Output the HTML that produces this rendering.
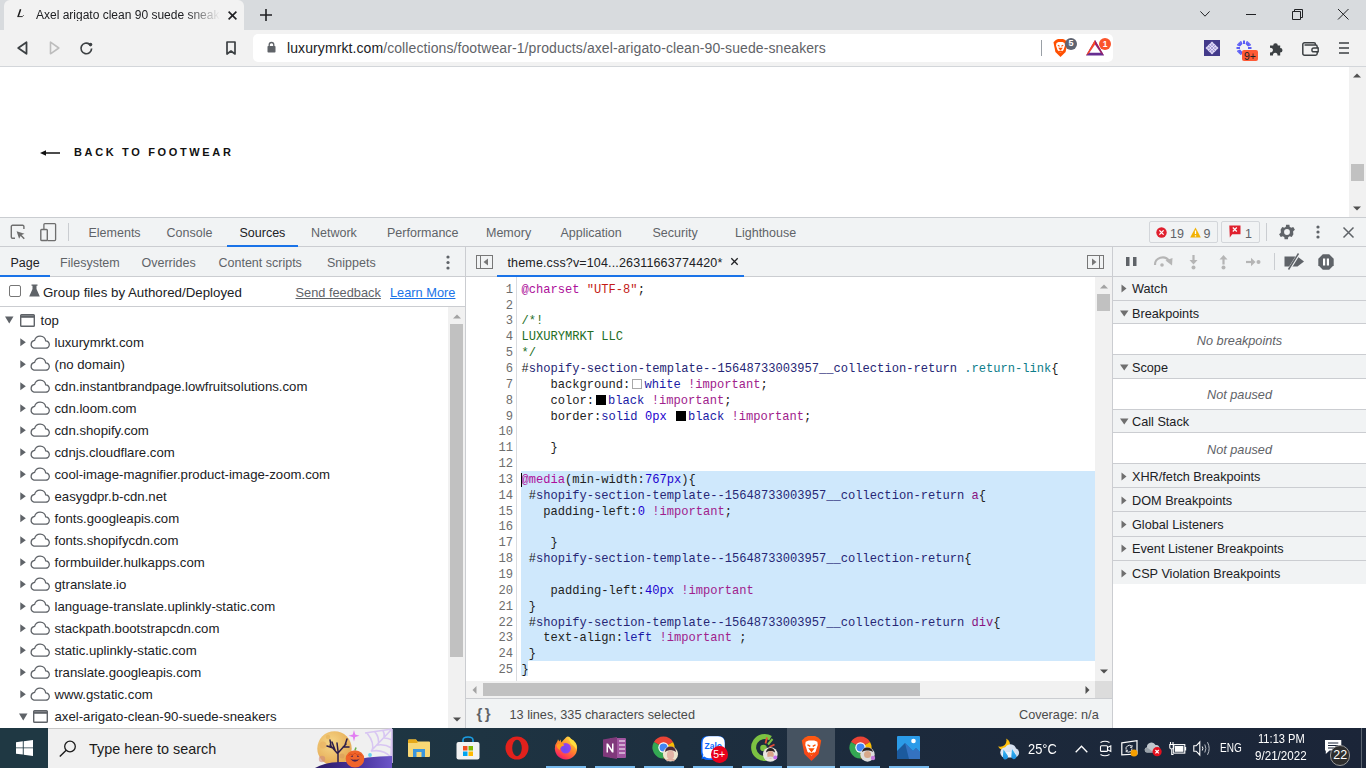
<!DOCTYPE html>
<html><head><meta charset="utf-8">
<style>
*{box-sizing:border-box;margin:0;padding:0}
html,body{width:1366px;height:768px;overflow:hidden;background:#fff;font-family:"Liberation Sans",sans-serif;color:#202124}
.a{position:absolute}
.t{position:absolute;white-space:nowrap;line-height:1}
svg{position:absolute;overflow:visible}
/* chrome */
#tabstrip{left:0;top:0;width:1366px;height:30px;background:#d8dbde}
#acttab{left:4px;top:0;width:240px;height:31px;background:#f2f2f2;border-radius:6px 6px 0 0}
#toolbar{left:0;top:30px;width:1366px;height:36px;background:#f2f2f2}
#tbline{left:0;top:66px;width:1366px;height:1px;background:#d3d6da}
#omni{left:253px;top:34px;width:860px;height:28px;background:#fff;border-radius:5px}
/* page */
#page{left:0;top:67px;width:1366px;height:150px;background:#fff}
/* devtools */
#dt{left:0;top:217px;width:1366px;height:511px;background:#fff}
.gray{background:#f1f3f4}
.bl{background:#cbcdd1}
.ui{font-size:12px;color:#303942}
.mono{font-family:"Liberation Mono",monospace;font-size:12px}
/* taskbar */
#task{left:0;top:728px;width:1366px;height:40px;background:linear-gradient(90deg,#1f3a45 0%,#1e3442 35%,#1c2a3c 65%,#1b2538 100%)}
</style></head><body>
<div id="tabstrip" class="a"></div>
<div id="acttab" class="a"></div>
<div id="toolbar" class="a"></div>
<div id="tbline" class="a"></div>
<div id="omni" class="a"></div>

<!-- tab -->
<svg style="left:16px;top:8px" width="9" height="10" viewBox="0 0 9 10"><path d="M4.6 1.3L2.1 8.4" stroke="#1a1a1a" stroke-width="1.5"/><path d="M1.3 8.6H6.3L7.6 7.3" fill="none" stroke="#1a1a1a" stroke-width="0.9"/></svg>
<div class="t" style="left:36px;top:8.6px;font-size:12px;color:#202124;width:184px;overflow:hidden;-webkit-mask-image:linear-gradient(90deg,#000 150px,transparent 184px)">Axel arigato clean 90 suede sneakers</div>
<svg style="left:227.5px;top:10.5px" width="9" height="9"><path d="M0.6 0.6L8.4 8.4M8.4 0.6L0.6 8.4" stroke="#202124" stroke-width="1.6"/></svg>
<svg style="left:260px;top:9px" width="12" height="12"><path d="M6 0V12M0 6H12" stroke="#202124" stroke-width="1.6"/></svg>
<!-- window controls -->
<svg style="left:1200px;top:11px" width="10" height="6"><path d="M0.4 0.4L5 5.2L9.6 0.4" fill="none" stroke="#202124" stroke-width="1"/></svg>
<svg style="left:1246px;top:14px" width="10" height="1"><path d="M0 0.5H10" stroke="#202124" stroke-width="1"/></svg>
<svg style="left:1292px;top:9px" width="11" height="11"><path d="M0.5 2.5H8.5V10.5H0.5Z M2.5 2.5V0.5H10.5V8.5H8.5" fill="none" stroke="#202124" stroke-width="1"/></svg>
<svg style="left:1338px;top:9px" width="10.5" height="10.5"><path d="M0 0L10.5 10.5M10.5 0L0 10.5" stroke="#202124" stroke-width="1"/></svg>
<!-- nav -->
<svg style="left:17px;top:41px" width="11" height="14"><path d="M9.5 1.2V12.8L1.2 7Z" fill="none" stroke="#3c4043" stroke-width="1.8" stroke-linejoin="round"/></svg>
<svg style="left:49px;top:41px" width="11" height="14"><path d="M1.5 1.2V12.8L9.8 7Z" fill="none" stroke="#bdbdbd" stroke-width="1.6" stroke-linejoin="round"/></svg>
<svg style="left:79px;top:41px" width="15" height="15"><path d="M12.6 7.5A5.3 5.3 0 1 1 10.5 3.2" fill="none" stroke="#3c4043" stroke-width="1.7"/><circle cx="11.5" cy="3.6" r="1.8" fill="#3c4043"/></svg>
<svg style="left:226px;top:41px" width="10" height="14"><path d="M1 1H9V13L5 10L1 13Z" fill="none" stroke="#3c4043" stroke-width="1.7" stroke-linejoin="round"/></svg>
<!-- omnibox contents -->
<svg style="left:267px;top:41px" width="9" height="12"><path d="M2.2 5.5V3.8A2.3 2.3 0 0 1 6.8 3.8V5.5" fill="none" stroke="#5f6368" stroke-width="1.3"/><rect x="0.5" y="5" width="8" height="6.5" rx="0.8" fill="#5f6368"/></svg>
<div class="t" style="left:287px;top:41px;font-size:14px;letter-spacing:0.09px;color:#202124">luxurymrkt.com<span style="color:#5f6368">/collections/footwear-1/products/axel-arigato-clean-90-suede-sneakers</span></div>
<div class="a" style="left:1041px;top:40px;width:1px;height:16px;background:#9aa0a6"></div>
<!-- brave lion -->
<svg style="left:1053px;top:39px" width="15" height="18" viewBox="0 0 15 18"><path d="M2.8 1L5 0H10L12.2 1L14.5 3.3L14 6L12.6 13L7.5 18L2.4 13L1 6L0.5 3.3Z" fill="#ff4f00"/><path d="M3.5 4L5.5 3H9.5L11.5 4L12 6.5L10.5 11L7.5 14L4.5 11L3 6.5Z" fill="#fff"/><path d="M4.8 6.3L6.6 7.3M10.2 6.3L8.4 7.3M6.3 9.2H8.7L7.5 10.8ZM5.8 12L7.5 13.2L9.2 12" fill="#ff4f00" stroke="#ff4f00" stroke-width="1.1"/></svg>
<div class="a" style="left:1065.2px;top:37.8px;width:11.8px;height:11.8px;border-radius:6px;background:#5e6370;color:#fff;font-size:9px;font-weight:bold;text-align:center;line-height:11.8px">5</div>
<!-- BAT -->
<svg style="left:1086px;top:40px" width="18" height="16" viewBox="0 0 18 16"><path d="M9 0L18 15.6H0Z" fill="#662d91"/><path d="M9 0L0 15.6L3.4 12.8L9 4.6Z" fill="#ff4724"/><path d="M9 0L18 15.6L14.6 12.8L9 4.6Z" fill="#9e1f63"/><path d="M9 4.6L14.6 12.8H3.4Z" fill="#fff"/></svg>
<div class="a" style="left:1099px;top:37.7px;width:12px;height:12px;border-radius:6px;background:#fb542b;color:#fff;font-size:8.5px;font-weight:bold;text-align:center;line-height:12px">1</div>
<!-- extensions -->
<div class="a" style="left:1204px;top:40px;width:16px;height:16px;background:#433a8a"></div>
<svg style="left:1204px;top:40px" width="16" height="16"><path d="M8 1.5L14.5 8L8 14.5L1.5 8Z" fill="#e4def8"/><path d="M4.75 4.75L11.25 11.25M3.1 6.4L9.6 12.9M6.4 3.1L12.9 9.6M11.25 4.75L4.75 11.25M12.9 6.4L6.4 12.9M9.6 3.1L3.1 9.6" stroke="#8c82c8" stroke-width="0.7"/></svg>
<svg style="left:1236px;top:40px" width="16" height="16" viewBox="0 0 16 16"><g stroke="#5a5cf5" stroke-width="2"><path d="M8 0.5V4M8 12V15.5M0.5 8H4M12 8H15.5M2.7 2.7L5.2 5.2M10.8 10.8L13.3 13.3M13.3 2.7L10.8 5.2M5.2 10.8L2.7 13.3"/><path d="M4.5 1.2L5.8 4.4M11.5 1.2L10.2 4.4M1.2 4.5L4.4 5.8M14.8 4.5L11.6 5.8M1.2 11.5L4.4 10.2M4.5 14.8L5.8 11.6" stroke-width="1.6"/></g></svg>
<div class="a" style="left:1242px;top:49.7px;width:15.8px;height:11.8px;border-radius:2px;background:#ff5a36;color:#202124;font-size:10.5px;text-align:center;line-height:12px">9+</div>
<svg style="left:1268.5px;top:40.5px" width="15" height="15" viewBox="0 0 15 15"><path d="M1 4.5H4.2A2.3 2.3 0 1 1 8.8 4.5H11.2V7A2.3 2.3 0 1 1 11.2 11.6V14.5H8.5A2.3 2.3 0 1 0 4 14.5H1V11.3A2.3 2.3 0 1 0 1 6.9Z" fill="#3c4043"/></svg>
<svg style="left:1302px;top:41.5px" width="17" height="14" viewBox="0 0 17 14"><path d="M13.5 3V2.2A1.5 1.5 0 0 0 12 0.8H2.5A1.7 1.7 0 0 0 0.8 2.5V11.5A1.7 1.7 0 0 0 2.5 13.2H13.5A1.7 1.7 0 0 0 15.2 11.5V4.7A1.7 1.7 0 0 0 13.5 3H2.5" fill="none" stroke="#3c4043" stroke-width="1.5"/><path d="M16.2 6H11.8A1.9 1.9 0 0 0 11.8 9.8H16.2Z" fill="#f2f2f2" stroke="#3c4043" stroke-width="1.4"/></svg>
<svg style="left:1339px;top:42px" width="10" height="12"><path d="M0 1H10M0 6H10M0 11H10" stroke="#3c4043" stroke-width="1.5"/></svg>
<div id="page" class="a"></div>

<!-- page content -->
<svg style="left:40px;top:150px" width="20" height="6"><path d="M3 3H20" stroke="#111" stroke-width="1.5"/><path d="M0 3L6 0.2V5.8Z" fill="#111"/></svg>
<div class="t" style="left:74px;top:146.6px;font-size:11px;font-weight:bold;letter-spacing:2.65px;color:#111">BACK TO FOOTWEAR</div>
<div class="a" style="left:1349px;top:67px;width:17px;height:150px;background:#f1f1f1"></div>
<svg style="left:1352px;top:72px" width="10" height="6"><path d="M1 5.5L5 1.5L9 5.5Z" fill="#505050"/></svg>
<div class="a" style="left:1351px;top:164px;width:13px;height:17px;background:#c1c1c1"></div>
<svg style="left:1352px;top:205.5px" width="10" height="6"><path d="M1 0.5L5 4.5L9 0.5Z" fill="#505050"/></svg>

<div id="dt" class="a"></div>

<!-- devtools frame -->
<div class="a" style="left:0;top:217px;width:1366px;height:1px;background:#cacdd1"></div>
<div class="a gray" style="left:0;top:218px;width:1366px;height:28px"></div>
<div class="a bl" style="left:0;top:246px;width:1366px;height:1px"></div>
<div class="a gray" style="left:0;top:247px;width:1366px;height:29px"></div>
<div class="a bl" style="left:0;top:276px;width:1366px;height:1px"></div>
<div class="a bl" style="left:465px;top:247px;width:1px;height:481px"></div>
<div class="a bl" style="left:1112px;top:247px;width:1px;height:481px"></div>
<!-- main toolbar icons -->
<svg style="left:10px;top:224px" width="18" height="17" viewBox="0 0 18 17"><path d="M5 14.2H2.5A1.2 1.2 0 0 1 1.3 13V2.5A1.2 1.2 0 0 1 2.5 1.3H12.7A1.2 1.2 0 0 1 13.9 2.5V5" fill="none" stroke="#6e6e6e" stroke-width="1.4"/><path d="M6.6 7.3L14.5 9.7L11.6 10.9L14.8 14.3L13.7 15.2L10.6 11.9L9.1 14.7Z" fill="#6e6e6e"/></svg>
<svg style="left:40px;top:223px" width="17" height="19" viewBox="0 0 17 19"><path d="M3.9 6V1.6A1 1 0 0 1 4.9 0.6H14.6A1 1 0 0 1 15.6 1.6V16.6A1 1 0 0 1 14.6 17.6H7.5" fill="none" stroke="#6e6e6e" stroke-width="1.3"/><rect x="0.8" y="6.5" width="6.5" height="11" rx="0.8" fill="none" stroke="#6e6e6e" stroke-width="1.4"/></svg>
<div class="a" style="left:68px;top:223px;width:1px;height:18px;background:#cacdd1"></div>
<div class="t" style="left:88.5px;top:227px;font-size:12.5px;color:#5f6368">Elements</div>
<div class="t" style="left:166.5px;top:227px;font-size:12.5px;color:#5f6368">Console</div>
<div class="t" style="left:239.5px;top:227px;font-size:12.5px;color:#202124">Sources</div>
<div class="a" style="left:227px;top:245px;width:71px;height:2px;background:#1a73e8"></div>
<div class="t" style="left:311px;top:227px;font-size:12.5px;color:#5f6368">Network</div>
<div class="t" style="left:387px;top:227px;font-size:12.5px;color:#5f6368">Performance</div>
<div class="t" style="left:486px;top:227px;font-size:12.5px;color:#5f6368">Memory</div>
<div class="t" style="left:560.5px;top:227px;font-size:12.5px;color:#5f6368">Application</div>
<div class="t" style="left:652.5px;top:227px;font-size:12.5px;color:#5f6368">Security</div>
<div class="t" style="left:735px;top:227px;font-size:12.5px;color:#5f6368">Lighthouse</div>
<!-- right of main toolbar -->
<div class="a" style="left:1149px;top:221px;width:69px;height:22px;border:1px solid #d3d6da;border-radius:2px"></div>
<svg style="left:1156px;top:227px" width="11" height="11"><circle cx="5.5" cy="5.5" r="5.2" fill="#e0202e"/><path d="M3.4 3.4L7.6 7.6M7.6 3.4L3.4 7.6" stroke="#fff" stroke-width="1.3"/></svg>
<div class="t" style="left:1170px;top:227.8px;font-size:12.5px;color:#5f6368">19</div>
<svg style="left:1189.5px;top:226.5px" width="11" height="11"><path d="M5.5 0.5L10.8 10.5H0.2Z" fill="#f2b204"/><path d="M5.5 3.5V7M5.5 8.2V9.6" stroke="#fff" stroke-width="1.3"/></svg>
<div class="t" style="left:1203.5px;top:227.8px;font-size:12.5px;color:#5f6368">9</div>
<div class="a" style="left:1221px;top:221px;width:39px;height:22px;border:1px solid #d3d6da;border-radius:2px"></div>
<svg style="left:1228.5px;top:225px" width="12" height="13" viewBox="0 0 12 13"><path d="M0.3 0.5H11.5V9.3H3.2L0.8 12.5Z" fill="#e0202e"/><path d="M3.8 2.5L7.8 6.5M7.8 2.5L3.8 6.5" stroke="#fff" stroke-width="1.2"/></svg>
<div class="t" style="left:1245px;top:227.8px;font-size:12.5px;color:#5f6368">1</div>
<div class="a" style="left:1266px;top:223px;width:1px;height:18px;background:#cacdd1"></div>
<svg style="left:1277px;top:222px" width="20" height="20" viewBox="0 0 24 24"><path fill="#5f6368" d="M19.4 13a7.6 7.6 0 0 0 0-2l2.1-1.6-2-3.5-2.5 1a7.3 7.3 0 0 0-1.7-1l-.4-2.7h-4l-.4 2.7a7.3 7.3 0 0 0-1.7 1l-2.5-1-2 3.5L4.6 11a7.6 7.6 0 0 0 0 2l-2.1 1.6 2 3.5 2.5-1a7.3 7.3 0 0 0 1.7 1l.4 2.7h4l.4-2.7a7.3 7.3 0 0 0 1.7-1l2.5 1 2-3.5zM12 15.5a3.5 3.5 0 1 1 0-7 3.5 3.5 0 0 1 0 7z"/></svg>
<svg style="left:1316px;top:225px" width="4" height="14"><circle cx="2" cy="2" r="1.6" fill="#5f6368"/><circle cx="2" cy="7" r="1.6" fill="#5f6368"/><circle cx="2" cy="12" r="1.6" fill="#5f6368"/></svg>
<svg style="left:1343px;top:226.5px" width="11" height="11"><path d="M0.5 0.5L10.5 10.5M10.5 0.5L0.5 10.5" stroke="#5f6368" stroke-width="1.5"/></svg>
<!-- sources row: navigator tabs -->
<div class="t" style="left:10.5px;top:256.5px;font-size:12.5px;color:#202124">Page</div>
<div class="a" style="left:0;top:275px;width:50px;height:2px;background:#1a73e8"></div>
<div class="t" style="left:60px;top:256.5px;font-size:12.5px;color:#5f6368">Filesystem</div>
<div class="t" style="left:141.5px;top:256.5px;font-size:12.5px;color:#5f6368">Overrides</div>
<div class="t" style="left:218.5px;top:256.5px;font-size:12.5px;color:#5f6368">Content scripts</div>
<div class="t" style="left:327px;top:256.5px;font-size:12.5px;color:#5f6368">Snippets</div>
<svg style="left:446px;top:255px" width="4" height="15"><circle cx="2" cy="2" r="1.6" fill="#5f6368"/><circle cx="2" cy="7.5" r="1.6" fill="#5f6368"/><circle cx="2" cy="13" r="1.6" fill="#5f6368"/></svg>
<!-- editor tabs row -->
<svg style="left:476px;top:255px" width="17" height="14"><rect x="0.5" y="0.5" width="16" height="13" fill="none" stroke="#777" stroke-width="1"/><path d="M4.5 0.5V13.5" stroke="#777" stroke-width="1"/><path d="M12 3.5V10.5L7.5 7Z" fill="#777"/></svg>
<div class="t" style="left:507.5px;top:256.5px;font-size:12.5px;color:#202124;letter-spacing:0.15px">theme.css?v=104...26311663774420*</div>
<svg style="left:731px;top:258px" width="7" height="7"><path d="M0.3 0.3L6.7 6.7M6.7 0.3L0.3 6.7" stroke="#202124" stroke-width="1.3"/></svg>
<div class="a" style="left:497px;top:275px;width:247px;height:2px;background:#1a73e8"></div>
<svg style="left:1087px;top:255px" width="17" height="14"><rect x="0.5" y="0.5" width="16" height="13" fill="none" stroke="#777" stroke-width="1"/><path d="M12.5 0.5V13.5" stroke="#777" stroke-width="1"/><path d="M5 3.5V10.5L9.5 7Z" fill="#777"/></svg>
<!-- debugger toolbar -->
<svg style="left:1125.5px;top:257px" width="11" height="9"><rect x="0" y="0" width="3.5" height="9" fill="#5f6368"/><rect x="7" y="0" width="3.5" height="9" fill="#5f6368"/></svg>
<svg style="left:1153px;top:256px" width="20" height="11" viewBox="0 0 20 11"><path d="M2 9A7.5 7 0 0 1 16 5" fill="none" stroke="#b5b5b5" stroke-width="2.2"/><path d="M12.5 4.5L19 9.5L19.5 2Z" fill="#b5b5b5"/><circle cx="9" cy="9" r="1.8" fill="#b5b5b5"/></svg>
<svg style="left:1187.5px;top:255px" width="11" height="15"><path d="M5.5 0V6" stroke="#b5b5b5" stroke-width="2.2"/><path d="M1.5 5H9.5L5.5 9.5Z" fill="#b5b5b5"/><circle cx="5.5" cy="12.5" r="2" fill="#b5b5b5"/></svg>
<svg style="left:1218px;top:255px" width="11" height="15"><path d="M5.5 3.5V9.5" stroke="#b5b5b5" stroke-width="2.2"/><path d="M1.5 4.5H9.5L5.5 0Z" fill="#b5b5b5"/><circle cx="5.5" cy="12.5" r="2" fill="#b5b5b5"/></svg>
<svg style="left:1246px;top:257px" width="15" height="10"><path d="M0 5H6" stroke="#b5b5b5" stroke-width="2.2"/><path d="M5 0.8V9.2L9.5 5Z" fill="#b5b5b5"/><circle cx="12.5" cy="5" r="2" fill="#b5b5b5"/></svg>
<div class="a" style="left:1274px;top:253px;width:1px;height:17px;background:#cacdd1"></div>
<svg style="left:1284px;top:253px" width="21" height="17" viewBox="0 0 21 17"><path d="M0.5 3.5H13.5L20 8.5L13.5 13.5H0.5Z" fill="#5f6368"/><path d="M5 16.5L15 0.5" stroke="#f1f3f4" stroke-width="3"/><path d="M4.5 16.5L14.5 0.5" stroke="#5f6368" stroke-width="1.5"/></svg>
<svg style="left:1317.5px;top:253.5px" width="16" height="16" viewBox="0 0 16 16"><path d="M4.8 0.3H11.2L15.7 4.8V11.2L11.2 15.7H4.8L0.3 11.2V4.8Z" fill="#5f6368"/><rect x="5" y="4.5" width="2.2" height="7" fill="#fff"/><rect x="8.8" y="4.5" width="2.2" height="7" fill="#fff"/></svg>


<!-- navigator -->
<div class="a" style="left:9px;top:285px;width:12px;height:12px;border:1px solid #767676;border-radius:2px;background:#fff"></div>
<svg style="left:29px;top:284px" width="11" height="13" viewBox="0 0 11 13"><path d="M2.5 0.5H8.5V1.8H7.5V5L10.8 12.5H0.2L3.5 5V1.8H2.5Z" fill="#5f6368"/></svg>
<div class="t" style="left:43px;top:285.8px;font-size:13.3px;color:#202124">Group files by Authored/Deployed</div>
<div class="t" style="left:295.5px;top:287px;font-size:12.8px;color:#5f6368;text-decoration:underline">Send feedback</div>
<div class="t" style="left:390px;top:287px;font-size:12.8px;color:#1a73e8;text-decoration:underline">Learn More</div>
<div class="a bl" style="left:0;top:306px;width:465px;height:1px"></div>
<!-- tree -->
<svg style="left:5px;top:316px" width="9" height="8"><path d="M0 0.5H8.5L4.25 7.5Z" fill="#5f6368"/></svg>
<svg style="left:19.5px;top:313.5px" width="15" height="13"><rect x="0.7" y="0.7" width="13.6" height="11.6" rx="0.8" fill="none" stroke="#5f6368" stroke-width="1.4"/><path d="M0.7 2.6H14.3" stroke="#5f6368" stroke-width="2.4"/></svg>
<div class="t" style="left:40.5px;top:313.6px;font-size:13.2px;color:#202124">top</div>
<svg style="left:20px;top:337.5px" width="6" height="9"><path d="M0.3 0.3V8.2L5.8 4.25Z" fill="#5f6368"/></svg><svg style="left:29px;top:336px" width="21" height="13" viewBox="0 0 21 13"><path d="M5 12.2H16.5A3.7 3.7 0 0 0 16.7 4.8A5.7 5.7 0 0 0 5.6 4.4A4 4 0 0 0 5 12.2Z" fill="none" stroke="#5f6368" stroke-width="1.3"/></svg><div class="t" style="left:54.5px;top:335.8px;font-size:13.2px;color:#202124">luxurymrkt.com</div>
<svg style="left:20px;top:359.5px" width="6" height="9"><path d="M0.3 0.3V8.2L5.8 4.25Z" fill="#5f6368"/></svg><svg style="left:29px;top:358px" width="21" height="13" viewBox="0 0 21 13"><path d="M5 12.2H16.5A3.7 3.7 0 0 0 16.7 4.8A5.7 5.7 0 0 0 5.6 4.4A4 4 0 0 0 5 12.2Z" fill="none" stroke="#5f6368" stroke-width="1.3"/></svg><div class="t" style="left:54.5px;top:357.8px;font-size:13.2px;color:#202124">(no domain)</div>
<svg style="left:20px;top:381.5px" width="6" height="9"><path d="M0.3 0.3V8.2L5.8 4.25Z" fill="#5f6368"/></svg><svg style="left:29px;top:380px" width="21" height="13" viewBox="0 0 21 13"><path d="M5 12.2H16.5A3.7 3.7 0 0 0 16.7 4.8A5.7 5.7 0 0 0 5.6 4.4A4 4 0 0 0 5 12.2Z" fill="none" stroke="#5f6368" stroke-width="1.3"/></svg><div class="t" style="left:54.5px;top:379.8px;font-size:13.2px;color:#202124">cdn.instantbrandpage.lowfruitsolutions.com</div>
<svg style="left:20px;top:403.5px" width="6" height="9"><path d="M0.3 0.3V8.2L5.8 4.25Z" fill="#5f6368"/></svg><svg style="left:29px;top:402px" width="21" height="13" viewBox="0 0 21 13"><path d="M5 12.2H16.5A3.7 3.7 0 0 0 16.7 4.8A5.7 5.7 0 0 0 5.6 4.4A4 4 0 0 0 5 12.2Z" fill="none" stroke="#5f6368" stroke-width="1.3"/></svg><div class="t" style="left:54.5px;top:401.8px;font-size:13.2px;color:#202124">cdn.loom.com</div>
<svg style="left:20px;top:425.5px" width="6" height="9"><path d="M0.3 0.3V8.2L5.8 4.25Z" fill="#5f6368"/></svg><svg style="left:29px;top:424px" width="21" height="13" viewBox="0 0 21 13"><path d="M5 12.2H16.5A3.7 3.7 0 0 0 16.7 4.8A5.7 5.7 0 0 0 5.6 4.4A4 4 0 0 0 5 12.2Z" fill="none" stroke="#5f6368" stroke-width="1.3"/></svg><div class="t" style="left:54.5px;top:423.8px;font-size:13.2px;color:#202124">cdn.shopify.com</div>
<svg style="left:20px;top:447.5px" width="6" height="9"><path d="M0.3 0.3V8.2L5.8 4.25Z" fill="#5f6368"/></svg><svg style="left:29px;top:446px" width="21" height="13" viewBox="0 0 21 13"><path d="M5 12.2H16.5A3.7 3.7 0 0 0 16.7 4.8A5.7 5.7 0 0 0 5.6 4.4A4 4 0 0 0 5 12.2Z" fill="none" stroke="#5f6368" stroke-width="1.3"/></svg><div class="t" style="left:54.5px;top:445.8px;font-size:13.2px;color:#202124">cdnjs.cloudflare.com</div>
<svg style="left:20px;top:469.5px" width="6" height="9"><path d="M0.3 0.3V8.2L5.8 4.25Z" fill="#5f6368"/></svg><svg style="left:29px;top:468px" width="21" height="13" viewBox="0 0 21 13"><path d="M5 12.2H16.5A3.7 3.7 0 0 0 16.7 4.8A5.7 5.7 0 0 0 5.6 4.4A4 4 0 0 0 5 12.2Z" fill="none" stroke="#5f6368" stroke-width="1.3"/></svg><div class="t" style="left:54.5px;top:467.8px;font-size:13.2px;color:#202124">cool-image-magnifier.product-image-zoom.com</div>
<svg style="left:20px;top:491.5px" width="6" height="9"><path d="M0.3 0.3V8.2L5.8 4.25Z" fill="#5f6368"/></svg><svg style="left:29px;top:490px" width="21" height="13" viewBox="0 0 21 13"><path d="M5 12.2H16.5A3.7 3.7 0 0 0 16.7 4.8A5.7 5.7 0 0 0 5.6 4.4A4 4 0 0 0 5 12.2Z" fill="none" stroke="#5f6368" stroke-width="1.3"/></svg><div class="t" style="left:54.5px;top:489.8px;font-size:13.2px;color:#202124">easygdpr.b-cdn.net</div>
<svg style="left:20px;top:513.5px" width="6" height="9"><path d="M0.3 0.3V8.2L5.8 4.25Z" fill="#5f6368"/></svg><svg style="left:29px;top:512px" width="21" height="13" viewBox="0 0 21 13"><path d="M5 12.2H16.5A3.7 3.7 0 0 0 16.7 4.8A5.7 5.7 0 0 0 5.6 4.4A4 4 0 0 0 5 12.2Z" fill="none" stroke="#5f6368" stroke-width="1.3"/></svg><div class="t" style="left:54.5px;top:511.8px;font-size:13.2px;color:#202124">fonts.googleapis.com</div>
<svg style="left:20px;top:535.5px" width="6" height="9"><path d="M0.3 0.3V8.2L5.8 4.25Z" fill="#5f6368"/></svg><svg style="left:29px;top:534px" width="21" height="13" viewBox="0 0 21 13"><path d="M5 12.2H16.5A3.7 3.7 0 0 0 16.7 4.8A5.7 5.7 0 0 0 5.6 4.4A4 4 0 0 0 5 12.2Z" fill="none" stroke="#5f6368" stroke-width="1.3"/></svg><div class="t" style="left:54.5px;top:533.8px;font-size:13.2px;color:#202124">fonts.shopifycdn.com</div>
<svg style="left:20px;top:557.5px" width="6" height="9"><path d="M0.3 0.3V8.2L5.8 4.25Z" fill="#5f6368"/></svg><svg style="left:29px;top:556px" width="21" height="13" viewBox="0 0 21 13"><path d="M5 12.2H16.5A3.7 3.7 0 0 0 16.7 4.8A5.7 5.7 0 0 0 5.6 4.4A4 4 0 0 0 5 12.2Z" fill="none" stroke="#5f6368" stroke-width="1.3"/></svg><div class="t" style="left:54.5px;top:555.8px;font-size:13.2px;color:#202124">formbuilder.hulkapps.com</div>
<svg style="left:20px;top:579.5px" width="6" height="9"><path d="M0.3 0.3V8.2L5.8 4.25Z" fill="#5f6368"/></svg><svg style="left:29px;top:578px" width="21" height="13" viewBox="0 0 21 13"><path d="M5 12.2H16.5A3.7 3.7 0 0 0 16.7 4.8A5.7 5.7 0 0 0 5.6 4.4A4 4 0 0 0 5 12.2Z" fill="none" stroke="#5f6368" stroke-width="1.3"/></svg><div class="t" style="left:54.5px;top:577.8px;font-size:13.2px;color:#202124">gtranslate.io</div>
<svg style="left:20px;top:601.5px" width="6" height="9"><path d="M0.3 0.3V8.2L5.8 4.25Z" fill="#5f6368"/></svg><svg style="left:29px;top:600px" width="21" height="13" viewBox="0 0 21 13"><path d="M5 12.2H16.5A3.7 3.7 0 0 0 16.7 4.8A5.7 5.7 0 0 0 5.6 4.4A4 4 0 0 0 5 12.2Z" fill="none" stroke="#5f6368" stroke-width="1.3"/></svg><div class="t" style="left:54.5px;top:599.8px;font-size:13.2px;color:#202124">language-translate.uplinkly-static.com</div>
<svg style="left:20px;top:623.5px" width="6" height="9"><path d="M0.3 0.3V8.2L5.8 4.25Z" fill="#5f6368"/></svg><svg style="left:29px;top:622px" width="21" height="13" viewBox="0 0 21 13"><path d="M5 12.2H16.5A3.7 3.7 0 0 0 16.7 4.8A5.7 5.7 0 0 0 5.6 4.4A4 4 0 0 0 5 12.2Z" fill="none" stroke="#5f6368" stroke-width="1.3"/></svg><div class="t" style="left:54.5px;top:621.8px;font-size:13.2px;color:#202124">stackpath.bootstrapcdn.com</div>
<svg style="left:20px;top:645.5px" width="6" height="9"><path d="M0.3 0.3V8.2L5.8 4.25Z" fill="#5f6368"/></svg><svg style="left:29px;top:644px" width="21" height="13" viewBox="0 0 21 13"><path d="M5 12.2H16.5A3.7 3.7 0 0 0 16.7 4.8A5.7 5.7 0 0 0 5.6 4.4A4 4 0 0 0 5 12.2Z" fill="none" stroke="#5f6368" stroke-width="1.3"/></svg><div class="t" style="left:54.5px;top:643.8px;font-size:13.2px;color:#202124">static.uplinkly-static.com</div>
<svg style="left:20px;top:667.5px" width="6" height="9"><path d="M0.3 0.3V8.2L5.8 4.25Z" fill="#5f6368"/></svg><svg style="left:29px;top:666px" width="21" height="13" viewBox="0 0 21 13"><path d="M5 12.2H16.5A3.7 3.7 0 0 0 16.7 4.8A5.7 5.7 0 0 0 5.6 4.4A4 4 0 0 0 5 12.2Z" fill="none" stroke="#5f6368" stroke-width="1.3"/></svg><div class="t" style="left:54.5px;top:665.8px;font-size:13.2px;color:#202124">translate.googleapis.com</div>
<svg style="left:20px;top:689.5px" width="6" height="9"><path d="M0.3 0.3V8.2L5.8 4.25Z" fill="#5f6368"/></svg><svg style="left:29px;top:688px" width="21" height="13" viewBox="0 0 21 13"><path d="M5 12.2H16.5A3.7 3.7 0 0 0 16.7 4.8A5.7 5.7 0 0 0 5.6 4.4A4 4 0 0 0 5 12.2Z" fill="none" stroke="#5f6368" stroke-width="1.3"/></svg><div class="t" style="left:54.5px;top:687.8px;font-size:13.2px;color:#202124">www.gstatic.com</div>
<svg style="left:19px;top:713px" width="9" height="8"><path d="M0 0.5H8.5L4.25 7.5Z" fill="#5f6368"/></svg><svg style="left:33px;top:709.5px" width="15" height="13"><rect x="0.7" y="0.7" width="13.6" height="11.6" rx="0.8" fill="none" stroke="#5f6368" stroke-width="1.4"/><path d="M0.7 2.6H14.3" stroke="#5f6368" stroke-width="2.4"/></svg><div class="t" style="left:54.5px;top:709.8px;font-size:13.2px;color:#202124">axel-arigato-clean-90-suede-sneakers</div>

<div class="a" style="left:448px;top:307px;width:17px;height:421px;background:#f1f1f1"></div>
<svg style="left:451.5px;top:313px" width="10" height="6"><path d="M1 5.5L5 1.5L9 5.5Z" fill="#a3a3a3"/></svg>
<div class="a" style="left:450px;top:324px;width:13px;height:333px;background:#c1c1c1"></div>
<svg style="left:451.5px;top:716.5px" width="10" height="6"><path d="M1 0.5L5 4.5L9 0.5Z" fill="#505050"/></svg>


<!-- editor -->
<style>
.ln{position:absolute;left:467px;width:46px;text-align:right;font-family:"Liberation Mono",monospace;font-size:12.13px;line-height:15.85px;color:#6d6d6d;white-space:pre}
.cl{position:absolute;left:521.5px;font-family:"Liberation Mono",monospace;font-size:12.1px;line-height:15.85px;color:#222;white-space:pre}
.sw{display:inline-block;width:10px;height:10px;border:1px solid #a8a8a8;margin:0 2px 0 2px;vertical-align:-1px;box-sizing:border-box}
</style>
<div class="a" style="left:520.5px;top:470.8px;width:574.5px;height:190.3px;background:#cfe8fc"></div>
<div class="a" style="left:520.5px;top:661.1px;width:7.3px;height:15px;background:#cfe8fc"></div>
<div class="a" style="left:516px;top:277px;width:1px;height:404px;background:#dadce0"></div>

<div class="ln" style="top:282.70px">1</div><div class="cl" style="top:282.70px"><span style="color:#ad0f9a">@charset</span> <span style="color:#c41a16">"UTF-8"</span>;</div>
<div class="ln" style="top:298.55px">2</div><div class="cl" style="top:298.55px"></div>
<div class="ln" style="top:314.40px">3</div><div class="cl" style="top:314.40px"><span style="color:#236e25">/*!</span></div>
<div class="ln" style="top:330.25px">4</div><div class="cl" style="top:330.25px"><span style="color:#236e25">LUXURYMRKT LLC</span></div>
<div class="ln" style="top:346.10px">5</div><div class="cl" style="top:346.10px"><span style="color:#236e25">*/</span></div>
<div class="ln" style="top:361.95px">6</div><div class="cl" style="top:361.95px">#<span style="color:#262675">shopify-section-template--15648733003957__collection-return</span> <span style="color:#0d7d8a">.return-link</span>{</div>
<div class="ln" style="top:377.80px">7</div><div class="cl" style="top:377.80px">    background:<i class="sw" style="background:#fff"></i><span style="color:#1a1aa6">white</span> <span style="color:#a0218c">!important</span>;</div>
<div class="ln" style="top:393.65px">8</div><div class="cl" style="top:393.65px">    color:<i class="sw" style="background:#000;border-color:#000"></i><span style="color:#1a1aa6">black</span> <span style="color:#a0218c">!important</span>;</div>
<div class="ln" style="top:409.50px">9</div><div class="cl" style="top:409.50px">    border:<span style="color:#1a1aa6">solid</span> <span style="color:#1c00cf">0px</span> <i class="sw" style="background:#000;border-color:#000"></i><span style="color:#1a1aa6">black</span> <span style="color:#a0218c">!important</span>;</div>
<div class="ln" style="top:425.35px">10</div><div class="cl" style="top:425.35px"></div>
<div class="ln" style="top:441.20px">11</div><div class="cl" style="top:441.20px">    }</div>
<div class="ln" style="top:457.05px">12</div><div class="cl" style="top:457.05px"></div>
<div class="ln" style="top:472.90px">13</div><div class="cl" style="top:472.90px"><span style="color:#ad0f9a">@media</span>(min-width:<span style="color:#1c00cf">767px</span>){</div>
<div class="ln" style="top:488.75px">14</div><div class="cl" style="top:488.75px"> #<span style="color:#262675">shopify-section-template--15648733003957__collection-return</span> <span style="color:#881280">a</span>{</div>
<div class="ln" style="top:504.60px">15</div><div class="cl" style="top:504.60px">   padding-left:<span style="color:#1c00cf">0</span> <span style="color:#a0218c">!important</span>;</div>
<div class="ln" style="top:520.45px">16</div><div class="cl" style="top:520.45px"></div>
<div class="ln" style="top:536.30px">17</div><div class="cl" style="top:536.30px">    }</div>
<div class="ln" style="top:552.15px">18</div><div class="cl" style="top:552.15px"> #<span style="color:#262675">shopify-section-template--15648733003957__collection-return</span>{</div>
<div class="ln" style="top:568.00px">19</div><div class="cl" style="top:568.00px"></div>
<div class="ln" style="top:583.85px">20</div><div class="cl" style="top:583.85px">    padding-left:<span style="color:#1c00cf">40px</span> <span style="color:#a0218c">!important</span></div>
<div class="ln" style="top:599.70px">21</div><div class="cl" style="top:599.70px"> }</div>
<div class="ln" style="top:615.55px">22</div><div class="cl" style="top:615.55px"> #<span style="color:#262675">shopify-section-template--15648733003957__collection-return</span> <span style="color:#881280">div</span>{</div>
<div class="ln" style="top:631.40px">23</div><div class="cl" style="top:631.40px">   text-align:<span style="color:#1a1aa6">left</span> <span style="color:#a0218c">!important</span> ;</div>
<div class="ln" style="top:647.25px">24</div><div class="cl" style="top:647.25px"> }</div>
<div class="ln" style="top:663.10px">25</div><div class="cl" style="top:663.10px">}</div>
<div class="a" style="left:521px;top:473px;width:1px;height:14px;background:#000"></div>
<!-- editor scrollbars -->
<div class="a" style="left:1095px;top:277px;width:17px;height:404px;background:#f1f1f1"></div>
<svg style="left:1098.5px;top:283px" width="10" height="6"><path d="M1 5.5L5 1.5L9 5.5Z" fill="#a3a3a3"/></svg>
<div class="a" style="left:1097px;top:294px;width:13px;height:16.5px;background:#c1c1c1"></div>
<svg style="left:1098.5px;top:669px" width="10" height="6"><path d="M1 0.5L5 4.5L9 0.5Z" fill="#505050"/></svg>
<div class="a" style="left:466px;top:681px;width:629px;height:17px;background:#f1f1f1"></div>
<div class="a" style="left:1095px;top:681px;width:17px;height:17px;background:#dcdcdc"></div>
<svg style="left:471px;top:684.5px" width="6" height="10"><path d="M5.5 1L1.5 5L5.5 9Z" fill="#a3a3a3"/></svg>
<div class="a" style="left:483px;top:683px;width:437px;height:13px;background:#c1c1c1"></div>
<svg style="left:1084.5px;top:684.5px" width="6" height="10"><path d="M0.5 1L4.5 5L0.5 9Z" fill="#505050"/></svg>
<!-- status bar -->
<div class="a bl" style="left:466px;top:698px;width:646px;height:1px"></div>
<div class="a gray" style="left:466px;top:699px;width:646px;height:29px"></div>
<div class="t" style="left:476.5px;top:706.2px;font-family:'Liberation Sans',sans-serif;font-size:15px;font-weight:bold;color:#5f6368;letter-spacing:2.5px">{}</div>
<div class="t" style="left:509.5px;top:708.5px;font-size:12.7px;color:#4a4a4a">13 lines, 335 characters selected</div>
<div class="t" style="left:1019px;top:708.5px;font-size:12.7px;color:#4a4a4a">Coverage: n/a</div>


<!-- debugger sidebar -->
<div class="a" style="left:1113px;top:277px;width:253px;height:451px;background:#fff"></div>
<div class="a gray" style="left:1113px;top:277px;width:253px;height:23px"></div><div class="a bl" style="left:1113px;top:300px;width:253px;height:1px"></div><svg style="left:1121px;top:284.1px" width="6" height="9"><path d="M0.5 0.5V8.5L5.5 4.5Z" fill="#6f6f6f"/></svg><div class="t" style="left:1132px;top:283.0px;font-size:12.7px;color:#202124">Watch</div>
<div class="a gray" style="left:1113px;top:301px;width:253px;height:22px"></div><div class="a bl" style="left:1113px;top:323px;width:253px;height:1px"></div><svg style="left:1119.5px;top:310.2px" width="9" height="7"><path d="M0 0.5H8.5L4.25 6.5Z" fill="#6f6f6f"/></svg><div class="t" style="left:1132px;top:307.6px;font-size:12.7px;color:#202124">Breakpoints</div>
<div class="a bl" style="left:1113px;top:354px;width:253px;height:1px"></div><div class="t" style="left:1113px;width:253px;text-align:center;top:334.6px;font-size:12.7px;font-style:italic;color:#5f6368">No breakpoints</div>
<div class="a gray" style="left:1113px;top:355px;width:253px;height:23px"></div><div class="a bl" style="left:1113px;top:378px;width:253px;height:1px"></div><svg style="left:1119.5px;top:364.3px" width="9" height="7"><path d="M0 0.5H8.5L4.25 6.5Z" fill="#6f6f6f"/></svg><div class="t" style="left:1132px;top:361.7px;font-size:12.7px;color:#202124">Scope</div>
<div class="a bl" style="left:1113px;top:409px;width:253px;height:1px"></div><div class="t" style="left:1113px;width:253px;text-align:center;top:388.8px;font-size:12.7px;font-style:italic;color:#5f6368">Not paused</div>
<div class="a gray" style="left:1113px;top:410px;width:253px;height:22px"></div><div class="a bl" style="left:1113px;top:432px;width:253px;height:1px"></div><svg style="left:1119.5px;top:418.4px" width="9" height="7"><path d="M0 0.5H8.5L4.25 6.5Z" fill="#6f6f6f"/></svg><div class="t" style="left:1132px;top:415.8px;font-size:12.7px;color:#202124">Call Stack</div>
<div class="a bl" style="left:1113px;top:463px;width:253px;height:1px"></div><div class="t" style="left:1113px;width:253px;text-align:center;top:444.2px;font-size:12.7px;font-style:italic;color:#5f6368">Not paused</div>
<div class="a gray" style="left:1113px;top:464px;width:253px;height:23px"></div><div class="a bl" style="left:1113px;top:487px;width:253px;height:1px"></div><svg style="left:1121px;top:471.5px" width="6" height="9"><path d="M0.5 0.5V8.5L5.5 4.5Z" fill="#6f6f6f"/></svg><div class="t" style="left:1132px;top:471.2px;font-size:12.7px;color:#202124">XHR/fetch Breakpoints</div>
<div class="a gray" style="left:1113px;top:488px;width:253px;height:23px"></div><div class="a bl" style="left:1113px;top:511px;width:253px;height:1px"></div><svg style="left:1121px;top:495.5px" width="6" height="9"><path d="M0.5 0.5V8.5L5.5 4.5Z" fill="#6f6f6f"/></svg><div class="t" style="left:1132px;top:495.2px;font-size:12.7px;color:#202124">DOM Breakpoints</div>
<div class="a gray" style="left:1113px;top:512px;width:253px;height:24px"></div><div class="a bl" style="left:1113px;top:536px;width:253px;height:1px"></div><svg style="left:1121px;top:519.5px" width="6" height="9"><path d="M0.5 0.5V8.5L5.5 4.5Z" fill="#6f6f6f"/></svg><div class="t" style="left:1132px;top:519.2px;font-size:12.7px;color:#202124">Global Listeners</div>
<div class="a gray" style="left:1113px;top:537px;width:253px;height:23px"></div><div class="a bl" style="left:1113px;top:560px;width:253px;height:1px"></div><svg style="left:1121px;top:543.7px" width="6" height="9"><path d="M0.5 0.5V8.5L5.5 4.5Z" fill="#6f6f6f"/></svg><div class="t" style="left:1132px;top:543.4px;font-size:12.7px;color:#202124">Event Listener Breakpoints</div>
<div class="a gray" style="left:1113px;top:561px;width:253px;height:23px"></div><svg style="left:1121px;top:568.7px" width="6" height="9"><path d="M0.5 0.5V8.5L5.5 4.5Z" fill="#6f6f6f"/></svg><div class="t" style="left:1132px;top:568.4px;font-size:12.7px;color:#202124">CSP Violation Breakpoints</div>
<div id="task" class="a"></div>
<!-- taskbar -->
<div class="a" style="left:0;top:728px;width:48px;height:40px;background:#1f3843"></div>
<svg style="left:16px;top:740px" width="17" height="16" viewBox="0 0 17 16"><path d="M0 2.3L6.8 1.3V7.4H0Z M7.7 1.2L17 0V7.4H7.7Z M0 8.3H6.8V14.6L0 13.7Z M7.7 8.3H17V16L7.7 14.8Z" fill="#fff"/></svg>
<div class="a" style="left:48px;top:728px;width:344px;height:40px;background:#f0f0f0;border-top:1px solid #c8c8c8"></div>
<svg style="left:59px;top:740px" width="18" height="17" viewBox="0 0 18 17"><circle cx="11" cy="6.5" r="5.3" fill="none" stroke="#1b1b1b" stroke-width="1.3"/><path d="M7.2 10.3L0.8 16.5" stroke="#1b1b1b" stroke-width="1.4"/></svg>
<div class="t" style="left:89px;top:741.6px;font-size:14.4px;color:#1b1b1b">Type here to search</div>
<!-- halloween art -->
<svg style="left:315px;top:729px" width="77" height="39" viewBox="0 0 77 39">
<defs><radialGradient id="moon" cx="0.4" cy="0.35" r="0.7"><stop offset="0" stop-color="#f7d889"/><stop offset="1" stop-color="#e3a650"/></radialGradient>
<linearGradient id="hill" x1="0" y1="0" x2="1" y2="0"><stop offset="0" stop-color="#2a1a66"/><stop offset="0.6" stop-color="#4a35a0"/><stop offset="1" stop-color="#6c55c8"/></linearGradient></defs>
<path d="M77 0V34M77 0L50 4M77 0L56 22M77 0L76 28M52 4Q60 14 57 22Q68 20 76 28M60 3Q65 9 63 16Q70 15 76.5 19M68 1.5Q70 5 69 9Q73 9 77 11" fill="none" stroke="#d8c6f2" stroke-width="1.6"/>
<circle cx="19.5" cy="19.5" r="17.2" fill="url(#moon)"/>
<circle cx="13" cy="8" r="2.2" fill="#e9b75e" opacity="0.8"/><circle cx="8" cy="16" r="3.5" fill="#eab464" opacity="0.7"/><circle cx="7" cy="30" r="3.2" fill="#d08a7a" opacity="0.6"/><circle cx="27" cy="27" r="2.5" fill="#d99a5a" opacity="0.6"/>
<path d="M23 36V22M23 25L15 16M23 24L31 15M18 19L12 17M28 18L34 18M16 17L15 11M30 16L32 10M23 22L22 14M20 21L17 13" stroke="#2d1d4a" stroke-width="1.5" fill="none" stroke-linecap="round"/>
<path d="M39 1L40.2 5.6L44.5 6.8L40.2 8L39 12.5L37.8 8L33.5 6.8L37.8 5.6Z" fill="#e27ef2"/>
<circle cx="55" cy="26" r="1.9" fill="#67d0f0"/>
<path d="M0 39Q12 32 30 33Q52 27 77 27V39Z" fill="url(#hill)"/>
<ellipse cx="40" cy="29.8" rx="9.3" ry="8.6" fill="#f0642a"/>
<path d="M33.5 26.5Q35 24 38 26Q40 22.5 42 26Q45 24 46.5 26.5" fill="none" stroke="#d84a18" stroke-width="0.8"/>
<path d="M35 29.5Q40 36 45 29.5Q42 31.5 40 30.5Q38 31.5 35 29.5Z" fill="#4a2350"/>
<path d="M35.5 27.5L37.5 26.3L38 28ZM44.5 27.5L42.5 26.3L42 28Z" fill="#4a2350"/>
<path d="M40 21.3L41 18.5" stroke="#6cb04a" stroke-width="1.6"/>
</svg>
<!-- pinned apps -->
<!-- explorer -->
<svg style="left:408px;top:739px" width="22" height="18" viewBox="0 0 22 18"><path d="M0 1.5Q0 0.5 1 0.5H8L9.5 2.5H21Q22 2.5 22 3.5V17Q22 18 21 18H1Q0 18 0 17Z" fill="#f8d775"/><path d="M0 1.5Q0 0.5 1 0.5H8L9.5 2.5V4H0Z" fill="#e7a918"/><path d="M5 18V10H17V18H13.5V13H8.5V18Z" fill="#3a96dd"/></svg>
<!-- store -->
<svg style="left:456px;top:736px" width="24" height="24" viewBox="0 0 24 24"><path d="M7 6V4Q7 1 12 1Q17 1 17 4V6" fill="none" stroke="#1b9de2" stroke-width="1.6"/><rect x="0.5" y="6" width="23" height="17.5" rx="2" fill="#f2f2f2"/><rect x="7" y="10" width="4.5" height="4.5" fill="#f25022"/><rect x="12.5" y="10" width="4.5" height="4.5" fill="#7fba00"/><rect x="7" y="15.5" width="4.5" height="4.5" fill="#00a4ef"/><rect x="12.5" y="15.5" width="4.5" height="4.5" fill="#ffb900"/></svg>
<!-- opera -->
<svg style="left:505px;top:736px" width="24" height="24" viewBox="0 0 24 24"><ellipse cx="12" cy="12" rx="11.5" ry="11.5" fill="#e2211c"/><ellipse cx="12" cy="12" rx="4.8" ry="8.3" fill="#1f3640"/></svg>
<!-- firefox -->
<svg style="left:554px;top:735.5px" width="24" height="24" viewBox="0 0 24 24"><defs><linearGradient id="ffb" x1="0.8" y1="0" x2="0.2" y2="1"><stop offset="0" stop-color="#ffe14a"/><stop offset="0.45" stop-color="#ff8a2a"/><stop offset="0.8" stop-color="#ff3b4e"/><stop offset="1" stop-color="#e8107a"/></linearGradient><radialGradient id="ffg" cx="0.4" cy="0.6" r="0.6"><stop offset="0" stop-color="#6a4cf0"/><stop offset="1" stop-color="#9a3ff0"/></radialGradient></defs><path d="M12 1.5Q13.5 0 15.5 1Q17 3 19.5 4.5Q24 8.5 23 14Q22 20 16.5 22.5Q12 24.3 7.5 22.5Q1.5 20 0.8 13Q0.6 8.5 3.5 5L4 3.3L5.3 5.5L6.5 3.5L7.3 6.5Q9.5 4 12 1.5Z" fill="url(#ffb)"/><path d="M14 1.5Q17 3 19.5 4.5Q23.5 9 22.5 13.5Q21 10 17 8Q15.5 5 14 1.5Z" fill="#ffde3e"/><circle cx="11.7" cy="12.2" r="5.2" fill="url(#ffg)"/><path d="M2.5 9Q5 6.5 8 7.5Q10 8 10.2 9.5Q8.5 9.8 7 11Q5.5 12.5 6 14Q3 13 2.5 9Z" fill="#ff9d1e"/></svg>
<!-- onenote -->
<svg style="left:603px;top:736px" width="24" height="24" viewBox="0 0 24 24"><rect x="7" y="2" width="16" height="20" rx="1" fill="#a155a0"/><path d="M16 5H22M16 9H22M16 13H22M16 17H22" stroke="#fff" stroke-width="1.2"/><path d="M0 3.5L14 1V23L0 20.5Z" fill="#80397b"/><path d="M3.5 16.5V7.5H5L9 13.5V7.5H10.5V16.5H9L5 10.5V16.5Z" fill="#fff"/></svg>
<!-- chrome w/ avatar -->
<svg style="left:652px;top:736px" width="27" height="26" viewBox="0 0 27 26"><path d="M11.5 11.5L1.97 6A11 11 0 0 1 21.03 6Z" fill="#ea4335"/><path d="M11.5 11.5L21.03 6A11 11 0 0 1 11.5 22.5Z" fill="#fbbc04"/><path d="M11.5 11.5L11.5 22.5A11 11 0 0 1 1.97 6Z" fill="#34a853"/><circle cx="11.5" cy="11.5" r="5.2" fill="#fff"/><circle cx="11.5" cy="11.5" r="4" fill="#4285f4"/><circle cx="18.5" cy="18" r="7.6" fill="#ede6cf"/><path d="M13 16Q13.5 10.5 18.5 10.5Q23.5 10.5 24 16Q22 14 18.5 14.3Q15 14 13 16Z" fill="#4a2838"/><ellipse cx="18.5" cy="19" rx="3.6" ry="4.4" fill="#e3b4a6"/><path d="M14.5 24.5Q18.5 22.5 22.5 24.5" stroke="#e0b0a0" stroke-width="2" fill="none"/></svg>
<!-- zalo -->
<svg style="left:701px;top:735.5px" width="26" height="26" viewBox="0 0 26 26"><path d="M7 0H17Q24 0 24 7V17Q24 24 17 24H7Q4 24 2 22.5L0.5 23.5L1 20Q0 18.5 0 16V7Q0 0 7 0Z" fill="#0a68fe"/><path d="M8 0.3H17Q23.7 0.3 23.7 7V16Q23.7 22.3 17 22.3H8Q5 22.3 3.5 20.5L2 21L2.3 18.5Q1.5 17 1.5 15V7Q1.5 0.3 8 0.3Z" fill="#fff"/><text x="3.5" y="13" font-family="Liberation Sans" font-weight="bold" font-size="8.5" fill="#0a68fe">Zalo</text></svg>
<div class="a" style="left:711px;top:746px;width:16.5px;height:16.5px;border-radius:50%;background:#e8001c"></div>
<div class="t" style="left:711px;width:16.5px;text-align:center;top:749px;font-size:10.5px;color:#fff">5+</div>
<!-- coccoc -->
<svg style="left:752px;top:736px" width="26" height="26" viewBox="0 0 26 26"><path d="M18.5 2.2A11 11 0 1 0 21.5 18" fill="none" stroke="#7cc242" stroke-width="5"/><circle cx="11.5" cy="12" r="3.3" fill="#7cc242"/><path d="M13.5 7.5L15 1.5" stroke="#e84b37" stroke-width="1.8"/><path d="M16 8.5L20.5 3" stroke="#7cc242" stroke-width="2"/><path d="M17.5 11L22.5 8.5" stroke="#e84b37" stroke-width="1.8"/><circle cx="18.3" cy="18.5" r="7.3" fill="#e8e6e0"/><path d="M14 16.5Q14.5 12 18.5 12Q22.5 12 23 16.5Q21 14.5 18.5 15Q16 14.5 14 16.5Z" fill="#2a2020"/><ellipse cx="18.5" cy="18.8" rx="3.3" ry="3.8" fill="#d9a48a"/><path d="M13 23Q18.5 19.5 24 23" stroke="#ddd" stroke-width="1.5" fill="none"/><circle cx="23.3" cy="21.5" r="2" fill="#c76ee8"/></svg>
<!-- brave active -->
<div class="a" style="left:787px;top:728px;width:48px;height:40px;background:#465361"></div>
<svg style="left:800.5px;top:735.5px" width="21" height="25" viewBox="0 0 15 18"><defs><linearGradient id="bg1" x1="0" y1="0" x2="0" y2="1"><stop offset="0" stop-color="#ff5a10"/><stop offset="1" stop-color="#f2401d"/></linearGradient></defs><path d="M2.8 1L5 0H10L12.2 1L14.5 3.3L14 6L12.6 13L7.5 18L2.4 13L1 6L0.5 3.3Z" fill="url(#bg1)"/><path d="M3.3 4.2L5.5 3.3H9.5L11.7 4.2L12 6.5L10.5 11L7.5 14.2L4.5 11L3 6.5Z" fill="#fff"/><path d="M4.6 6.3L6.6 7.5M10.4 6.3L8.4 7.5M6.2 9.3H8.8L7.5 11ZM5.6 12.1L7.5 13.4L9.4 12.1" fill="#ff5000" stroke="#ff5000" stroke-width="1"/></svg>
<!-- chrome 2 -->
<svg style="left:849px;top:736px" width="27" height="26" viewBox="0 0 27 26"><path d="M11.5 11.5L1.97 6A11 11 0 0 1 21.03 6Z" fill="#ea4335"/><path d="M11.5 11.5L21.03 6A11 11 0 0 1 11.5 22.5Z" fill="#fbbc04"/><path d="M11.5 11.5L11.5 22.5A11 11 0 0 1 1.97 6Z" fill="#34a853"/><circle cx="11.5" cy="11.5" r="5.2" fill="#fff"/><circle cx="11.5" cy="11.5" r="4" fill="#4285f4"/><circle cx="18.5" cy="18.5" r="7.2" fill="#ddd"/><path d="M13 16Q14 11 18.5 11.5Q23 11.5 24 16Q22 14 18.5 14.5Q15 14 13 16Z" fill="#2a2020"/><circle cx="18.5" cy="18.5" r="3.5" fill="#d7a88a"/><circle cx="24" cy="22" r="2.2" fill="#c57bdc"/></svg>
<!-- photos -->
<svg style="left:897px;top:736px" width="23" height="23" viewBox="0 0 23 23"><rect x="0" y="0" width="23" height="23" rx="1" fill="#2b9be8"/><path d="M0 23V15L8 7L16 15L19 12L23 16V23Z" fill="#1b5a9e"/><path d="M8 7L16 15L19 12L23 16V23H12Z" fill="#3b78c9" opacity="0.8"/><circle cx="16.5" cy="5" r="2.3" fill="#fff"/></svg>
<!-- running underlines -->
<div class="a" style="left:546px;top:766px;width:40px;height:2px;background:#76b9ed"></div>
<div class="a" style="left:595px;top:766px;width:40px;height:2px;background:#76b9ed"></div>
<div class="a" style="left:644px;top:766px;width:40px;height:2px;background:#76b9ed"></div>
<div class="a" style="left:693px;top:766px;width:40px;height:2px;background:#76b9ed"></div>
<div class="a" style="left:742px;top:766px;width:40px;height:2px;background:#76b9ed"></div>
<div class="a" style="left:787px;top:766px;width:48px;height:2px;background:#8ec8f2"></div>
<div class="a" style="left:840px;top:766px;width:40px;height:2px;background:#76b9ed"></div>
<div class="a" style="left:889px;top:766px;width:40px;height:2px;background:#76b9ed"></div>
<!-- tray -->
<svg style="left:996px;top:737px" width="24" height="23" viewBox="0 0 24 23"><defs><mask id="mm"><rect width="24" height="23" fill="#fff"/><circle cx="4.3" cy="3.6" r="6.2" fill="#000"/></mask><linearGradient id="cl" x1="0" y1="0" x2="1" y2="1"><stop offset="0" stop-color="#e4ecf8"/><stop offset="1" stop-color="#c5d3e6"/></linearGradient><linearGradient id="dr" x1="0" y1="0" x2="0" y2="1"><stop offset="0" stop-color="#36b6f2"/><stop offset="1" stop-color="#1e8fe0"/></linearGradient></defs><circle cx="8" cy="7.2" r="6" fill="#ffc00d" mask="url(#mm)"/><circle cx="9.5" cy="15.5" r="5.2" fill="url(#cl)"/><circle cx="14.5" cy="12.8" r="5.6" fill="url(#cl)"/><circle cx="18.5" cy="15.8" r="4.6" fill="url(#cl)"/><rect x="6" y="15" width="14" height="5.5" rx="2.5" fill="#edf2fa"/><path d="M7.5 12.5L11.5 18.3A2.6 2.6 0 1 1 6.8 19.8Z" fill="url(#dr)"/><path d="M16 12L20 18A2.6 2.6 0 1 1 15.3 19.5Z" fill="url(#dr)"/></svg>
<div class="t" style="left:1028px;top:741.8px;font-size:14.6px;color:#fff;transform:scaleX(0.88);transform-origin:0 0">25°C</div>
<svg style="left:1075px;top:745px" width="13" height="8"><path d="M0.7 7.3L6.5 1.3L12.3 7.3" fill="none" stroke="#fff" stroke-width="1.3"/></svg>
<svg style="left:1099px;top:739.5px" width="13" height="17" viewBox="0 0 13 17"><path d="M1.5 2.5Q6 0 10.5 2.5M1.5 14.5Q6 17 10.5 14.5" fill="none" stroke="#fff" stroke-width="1.1"/><rect x="1.5" y="5.8" width="7" height="5.6" rx="1" fill="none" stroke="#fff" stroke-width="1.1"/><path d="M8.5 7.5L11.8 5.8V11.4L8.5 9.7" fill="none" stroke="#fff" stroke-width="1.1"/></svg>
<svg style="left:1120.5px;top:739.5px" width="18" height="17" viewBox="0 0 18 17"><path d="M0.8 2.8L16 0.6V14L0.8 14.8Z" fill="none" stroke="#fff" stroke-width="1.2"/><path d="M5 9.5A3.5 3.5 0 0 1 10.5 6M11 5.2V7.3H9M11 8.5A3.5 3.5 0 0 1 5.5 11.5M5.2 12.3V10.3H7" fill="none" stroke="#fff" stroke-width="0.9"/><circle cx="13" cy="13" r="3.5" fill="#f7a000"/></svg>
<svg style="left:1144.5px;top:742px" width="18" height="15" viewBox="0 0 18 15"><path d="M2.5 10.5A2.5 2.5 0 0 1 2 5.5A4.5 4.5 0 0 1 10.5 3A3.3 3.3 0 0 1 14 8V10.5Z" fill="#c0c6cc"/><path d="M2.5 10.5A2.5 2.5 0 0 1 2 5.5L9 10.5Z" fill="#9aa2aa"/><circle cx="12.1" cy="9.7" r="4.6" fill="#e4101e"/><path d="M10.4 8L13.8 11.4M13.8 8L10.4 11.4" stroke="#fff" stroke-width="1.2"/></svg>
<svg style="left:1168.5px;top:741.5px" width="18" height="14" viewBox="0 0 18 14"><path d="M1.5 0V2.5M4 0V2.5M0.8 2.5H4.7V5.5Q4.7 7 2.75 7Q0.8 7 0.8 5.5Z M2.75 7V12.5H4.5" fill="none" stroke="#fff" stroke-width="1.1"/><rect x="4.3" y="2.6" width="11.5" height="8.5" fill="none" stroke="#fff" stroke-width="1.1"/><rect x="5.8" y="4" width="8.6" height="5.8" fill="#fff"/><path d="M16.5 5V8.5" stroke="#fff" stroke-width="1.3"/></svg>
<svg style="left:1192.5px;top:741px" width="18" height="15" viewBox="0 0 18 15"><path d="M0.8 4.8H3.2L6.8 1V14L3.2 10.2H0.8Z" fill="none" stroke="#fff" stroke-width="1.1"/><path d="M9.3 5.5Q10.5 7.5 9.3 9.5" fill="none" stroke="#fff" stroke-width="1"/><path d="M11.8 3.5Q14 7.5 11.8 11.5M14.5 1.2Q17.8 7.5 14.5 13.8" fill="none" stroke="#b8bec6" stroke-width="1"/></svg>
<div class="t" style="left:1219.5px;top:741.8px;font-size:12px;color:#fff;transform:scaleX(0.835);transform-origin:0 0">ENG</div>
<div class="t" style="left:1257.6px;top:732.7px;font-size:12px;color:#fff;transform:scaleX(0.927);transform-origin:0 0">11:13 PM</div>
<div class="t" style="left:1254.5px;top:750.4px;font-size:12px;color:#fff;transform:scaleX(0.968);transform-origin:0 0">9/21/2022</div>
<svg style="left:1324.8px;top:740px" width="17" height="15" viewBox="0 0 17 15"><path d="M0 0H16.3V10.5H4.5L0.8 14V10.5H0Z" fill="#fff"/><path d="M3 3H13.3M3 5.5H13.3M3 8H10" stroke="#1b2538" stroke-width="1.1"/></svg>
<div class="a" style="left:1329.9px;top:745.1px;width:20.6px;height:20.6px;border-radius:50%;background:#2e2e2e;border:1.2px solid #9a9a9a"></div>
<div class="t" style="left:1329.9px;width:20.6px;text-align:center;top:749.2px;font-size:12.5px;color:#fff">22</div>
<div class="a" style="left:1361px;top:728px;width:1px;height:40px;background:#5b6470"></div>

</body></html>
